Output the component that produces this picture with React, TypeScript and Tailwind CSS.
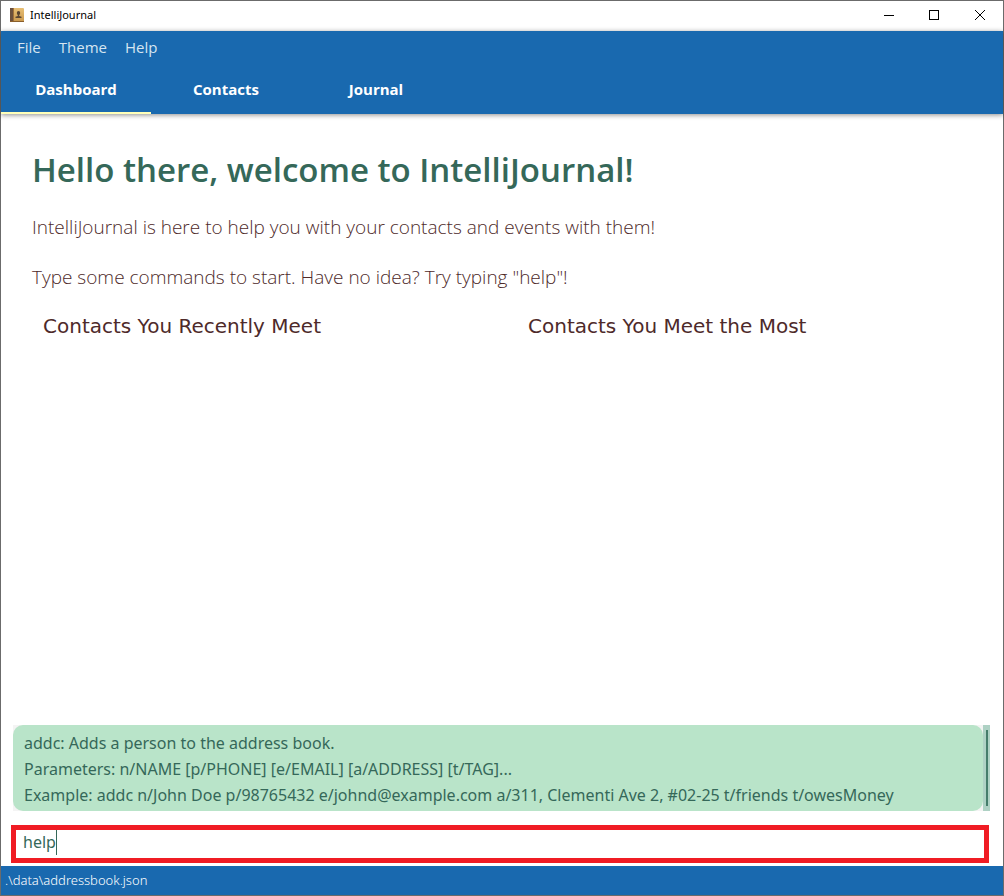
import { useState } from "react";

const tabs = ["Dashboard", "Contacts", "Journal"];
const menus = ["File", "Theme", "Help"];

function BookIcon() {
  return (
    <svg width="14" height="14" viewBox="0 0 14 14" aria-hidden="true">
      <defs>
        <linearGradient id="cover" x1="0" y1="0" x2="0" y2="1">
          <stop offset="0" stopColor="#e8bf74" />
          <stop offset="1" stopColor="#c9974c" />
        </linearGradient>
      </defs>
      <rect width="14" height="14" rx="1" fill="url(#cover)" />
      <rect width="3" height="14" fill="#6b4f3c" />
      <rect x="3" width="1" height="14" fill="#a0713a" />
      <rect y="13" width="14" height="1" fill="#8a5f2c" />
      <ellipse cx="8.500" cy="5" rx="1.700" ry="2" fill="#5a4532" />
      <path d="M7.800 6h1.400v2l2.300 .7V10h-6V8.700L7.800 8z" fill="#5a4532" />
    </svg>
  );
}

function TitleBar() {
  return (
    <header className="flex h-[30px] shrink-0 items-center bg-white pb-0.5 pl-[9px]">
      <BookIcon />
      <h1 className="ml-[6px] flex-1 font-['Noto_Sans',sans-serif] text-[11px] text-black">IntelliJournal</h1>
      <button aria-label="Minimize" className="flex h-7 w-[45px] items-center justify-center">
        <svg width="10" height="10" viewBox="0 0 10 10"><path d="M0 5.500h10" stroke="#000" /></svg>
      </button>
      <button aria-label="Maximize" className="flex h-7 w-[46px] items-center justify-center">
        <svg width="10" height="10" viewBox="0 0 10 10"><rect x=".5" y=".5" width="9" height="9" fill="none" stroke="#000" /></svg>
      </button>
      <button aria-label="Close" className="flex h-7 w-[46px] items-center justify-center">
        <svg width="10" height="10" viewBox="0 0 10 10"><path d="M0 0l10 10M10 0L0 10" stroke="#000" /></svg>
      </button>
    </header>
  );
}

export default function App() {
  const [active, setActive] = useState("Dashboard");
  const [command, setCommand] = useState("help");

  return (
    <div className="flex h-screen flex-col border border-[#6b6b6b] bg-white font-['Noto_Sans',sans-serif]">
      <TitleBar />
      <div className="z-10 shrink-0 bg-[#1969af] font-['Open_Sans',sans-serif] shadow-[0_1px_5px_rgba(0,0,0,0.45)]">
        <nav aria-label="Menu" className="flex h-8 items-center gap-[18px] pl-4 text-[15px] text-[#d6e5f1]">
          {menus.map((menu) => (
            <button key={menu}>{menu}</button>
          ))}
        </nav>
        <div role="tablist" className="flex">
          {tabs.map((tab) => (
            <button
              key={tab}
              role="tab"
              aria-selected={tab === active}
              onClick={() => setActive(tab)}
              className={
                "h-[51px] w-[150px] border-b-2 pt-[3px] text-[15px] font-bold text-white " +
                (tab === active ? "border-[#ffffb8]" : "border-transparent")
              }
            >
              {tab}
            </button>
          ))}
        </div>
      </div>

      <main className="flex-1 pt-8 text-[#4e2a2a]">
        <h2 className="pl-[31px] font-['Open_Sans',sans-serif] text-[33px] leading-[48px] font-semibold text-[#356859]">
          Hello there, welcome to IntelliJournal!
        </h2>
        <div className="mt-5 flex flex-col gap-6 pl-[31px] font-['Open_Sans',sans-serif] text-[19px] leading-[26px] font-light">
          <p>IntelliJournal is here to help you with your contacts and events with them!</p>
          <p>Type some commands to start. Have no idea? Try typing "help"!</p>
        </div>
        <div className="mt-5 grid grid-cols-2 pr-[30px] pl-[42px] font-['DejaVu_Sans',sans-serif] text-[20px] leading-8">
          <h3>Contacts You Recently Meet</h3>
          <h3 className="pl-5">Contacts You Meet the Most</h3>
        </div>
      </main>

      <section aria-label="Result" className="mr-[13px] ml-3 flex shrink-0 bg-[#f4f4f4]">
        <p className="flex-1 rounded-[10px] bg-[#b9e4c9] pt-[5px] pb-[3px] pl-[11px] text-[16px] leading-[26px] text-[#356859]">
          addc: Adds a person to the address book.
          <br />
          Parameters: n/NAME [p/PHONE] [e/EMAIL] [a/ADDRESS] [t/TAG]...
          <br />
          Example: addc n/John Doe p/98765432 e/johnd@example.com a/311, Clementi Ave 2, #02-25 t/friends t/owesMoney
        </p>
        <div className="flex w-[7px] justify-center bg-[#aed1c4] py-[5px]">
          <div className="w-[2px] bg-[#457d6b]" />
        </div>
      </section>

      <label className="mt-[14px] mr-[14px] mb-[3px] ml-[10px] flex h-[38px] shrink-0 items-start border-5 border-[#f01c24] pl-[7px]">
        <input
          aria-label="Command"
          value={command}
          onChange={(event) => setCommand(event.target.value)}
          className="field-sizing-content h-6 text-[16px] text-[#356859] caret-transparent outline-none"
        />
        <span className="h-[25px] w-px bg-[#356859]" />
      </label>

      <footer className="flex h-[29px] shrink-0 items-center bg-[#1969af] pl-1 text-[13px] font-light text-white">
        .\data\addressbook.json
      </footer>
    </div>
  );
}
